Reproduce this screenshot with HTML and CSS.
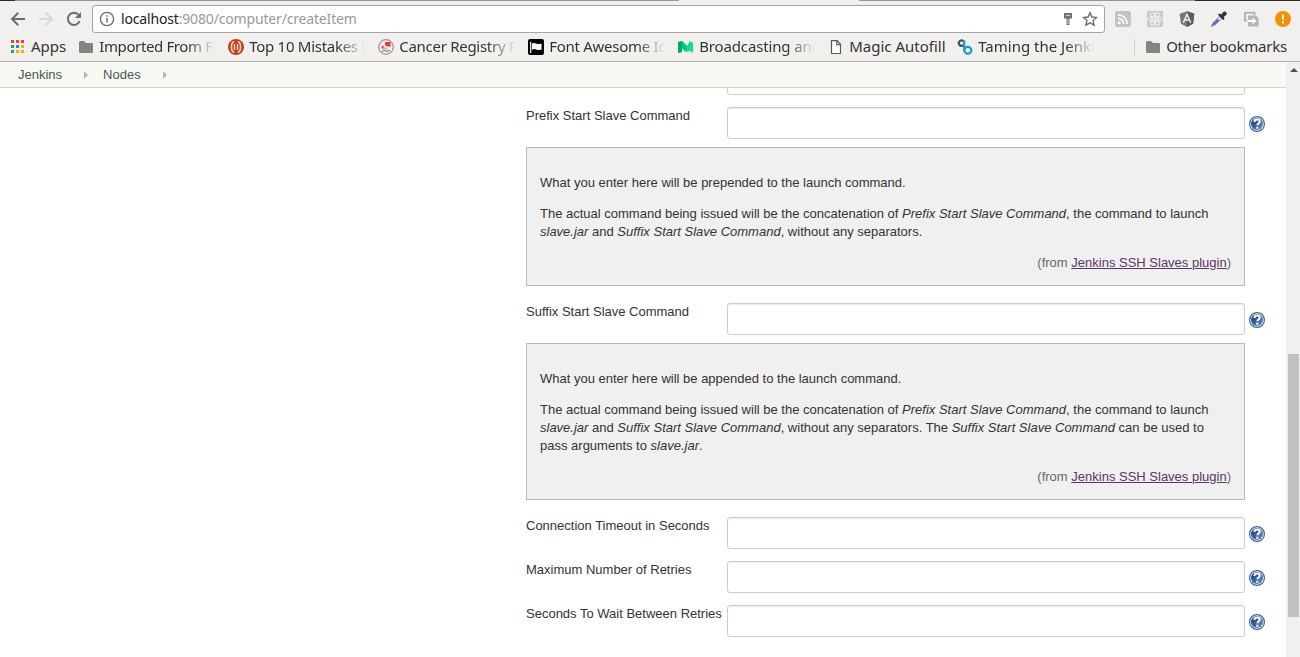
FILE: index.html
```
<!DOCTYPE html>
<html lang="en">
<head>
<meta charset="utf-8">
<title>Jenkins</title>
<link rel="stylesheet" href="styles.css">
</head>
<body>
<svg class="defs" width="0" height="0">
  <defs>
    <linearGradient id="blue" x1="0" y1="0" x2="1" y2="1"><stop offset="0.2" stop-color="#20467f"/><stop offset="1" stop-color="#6f97c8"/></linearGradient>
    <symbol id="help" viewBox="0 0 16 16">
      <circle cx="8" cy="8" r="7.400" fill="#fff" stroke="#3b64a0" stroke-width="1.200"/>
      <circle cx="8" cy="8" r="6" fill="url(#blue)"/>
      <path d="M5.400 6C5.500 4.300 6.600 3.600 8.100 3.600c1.600 0 2.600.8 2.600 2.100 0 1.700-2.300 1.800-2.300 3.600M8.300 10.700v2.100" fill="none" stroke="#fff" stroke-width="2"/>
    </symbol>
    <symbol id="folder" viewBox="0 0 16 16"><path d="M1 3.500Q1 2 2.300 2H6l2 2h6q1 0 1 1v8q0 1-1 1H2q-1 0-1-1z" fill="#848484"/></symbol>
  </defs>
</svg>
<div class="browser">
  <div class="tabstrip"><i class="dark start"></i><i class="tabs"></i><i class="active"></i><i class="tabs second"></i><i class="dark end"></i></div>
  <div class="toolbar">
    <svg class="nav" viewBox="0 0 16 16"><path d="M15 8H2.500M8.300 1.700L2 8l6.300 6.300" fill="none" stroke="#6e6e6e" stroke-width="2"/></svg>
    <svg class="nav" viewBox="0 0 16 16"><path d="M1 8h12.500M7.700 1.700L14 8l-6.300 6.300" fill="none" stroke="#d8d8d8" stroke-width="2"/></svg>
    <svg class="nav" viewBox="0 0 16 16"><path d="M13.600 10.200A6.100 6.100 0 1 1 12.300 3.600" fill="none" stroke="#6e6e6e" stroke-width="2"/><path d="M15 1v6H9z" fill="#6e6e6e"/></svg>
    <div class="address">
      <svg class="info" viewBox="0 0 16 16"><circle cx="8" cy="8" r="6.600" fill="none" stroke="#6b6b6b" stroke-width="1.300"/><path d="M8 7v4.500M8 4.300v1.500" stroke="#6b6b6b" stroke-width="1.500"/></svg>
      <span class="url"><b>localhost</b>:9080/computer/createItem</span>
      <svg class="key" viewBox="0 0 16 16"><path d="M4 2h8v5.500H9.500V14h-3V7.500H4z" fill="#737373"/><path d="M6 4.500h4M8 8v5" stroke="#d0d0d0"/></svg>
      <svg class="star" viewBox="0 0 16 16"><path d="M8 1.800l1.900 4.200 4.600.5-3.400 3.100 1 4.600L8 11.900l-4.100 2.300 1-4.600L1.500 6.500l4.600-.5z" fill="none" stroke="#6e6e6e" stroke-width="1.400"/></svg>
    </div>
    <div class="extensions">
      <svg viewBox="0 0 16 16"><rect width="16" height="16" rx="2" fill="#c3c3c3"/><circle cx="4.200" cy="11.800" r="1.500" fill="#fff"/><path d="M3 7.300a5.700 5.700 0 0 1 5.700 5.700M3 3.800A9.200 9.200 0 0 1 12.200 13" fill="none" stroke="#fff" stroke-width="1.700"/></svg>
      <svg viewBox="0 0 16 16"><rect width="16" height="16" fill="#c9c9c9"/><g fill="none" stroke="#f5f5f5"><ellipse cx="8" cy="8" rx="7" ry="2.700"/><ellipse cx="8" cy="8" rx="7" ry="2.700" transform="rotate(60 8 8)"/><ellipse cx="8" cy="8" rx="7" ry="2.700" transform="rotate(120 8 8)"/></g><circle cx="8" cy="8" r="1.400" fill="#f5f5f5"/></svg>
      <svg viewBox="0 0 16 16"><path d="M8 .3l7.300 2.500-1.200 9.900L8 15.900l-6.100-3.200L.7 2.800z" fill="#777"/><path d="M8 .3l7.300 2.500-1.200 9.900L8 15.900z" fill="#5b5b5b"/><path d="M4.300 11.800L8 3.300l3.700 8.500M5.800 9h4.400" fill="none" stroke="#eee" stroke-width="1.500"/></svg>
      <svg viewBox="0 0 16 16"><path d="M10 6l-7.500 7.500" stroke="#6f7888" stroke-width="3.600"/><path d="M9.500 6.500L3 13" stroke="#e9efff" stroke-width="2"/><path d="M7.500 8.500L3 13" stroke="#3e67e0" stroke-width="2"/><path d="M2.700 12.500L.5 15.500" stroke="#666" stroke-width="1.500"/><path d="M6.800 3.400l2-1 1.500 1L12.500.8Q14 0 15.300 1.200q1 1.500-.1 2.700L12.700 6l.8 1.700-1.200 1.500z" fill="#333"/></svg>
      <svg viewBox="0 0 16 16"><path d="M2 1v8.500h2M2 1.700h9.500V4" fill="none" stroke="#b5b5b5" stroke-width="2"/><path d="M5 4.500h8l2.500 2.500v8.500H5z" fill="#b5b5b5"/><path d="M5 10h6" fill="none" stroke="#fff" stroke-width="2"/><path d="M9.500 6.500L13.500 10l-4 3.500z" fill="#fff"/></svg>
      <svg viewBox="0 0 16 16"><circle cx="8" cy="8" r="8" fill="#f39200"/><path d="M8 3.500v5.300M8 10.300v2" stroke="#fff" stroke-width="2"/></svg>
    </div>
  </div>
  <div class="bookmarks">
    <div class="mark apps"><svg viewBox="0 0 16 16"><path d="M1 1h3v3H1zM6 1h3v3H6zM11 1h3v3h-3z" fill="#ea4335"/><path d="M1 6h3v3H1zM1 11h3v3H1z" fill="#2fa050"/><path d="M6 6h3v3H6z" fill="#2384f0"/><path d="M11 6h3v3h-3zM6 11h3v3H6zM11 11h3v3h-3z" fill="#fbae06"/></svg><span>Apps</span></div>
    <div class="mark wide tighter"><svg><use href="#folder"/></svg><span>Imported From Fi</span></div>
    <div class="mark wide tight"><svg viewBox="0 0 16 16"><circle cx="8" cy="8" r="8" fill="#c63f17"/><path d="M6.200 2.800Q3.500 3 3.500 8t2.700 5.200M9.800 2.800Q12.500 3 12.500 8t-2.700 5.200" fill="none" stroke="#f7ded5" stroke-width="1.500"/><path d="M6.500 5v6M9.500 5v6" stroke="#f7ded5" stroke-width="1.300"/></svg><span>Top 10 Mistakes N</span></div>
    <div class="mark wide tight"><svg viewBox="0 0 16 16"><circle cx="8" cy="8" r="7.300" fill="#f3eeee" stroke="#999" stroke-width="1.300"/><path d="M7 3h5.500v5.500l-2-1.500L9 8 7 5.500zM4 6.500l2 1-1 2.500-1.500-1z" fill="#ed3145"/><path d="M5 10.500l2-1.500 2 1.500" fill="none" stroke="#f39aa4" stroke-width="1.500"/><path d="M4 12.500l3-1.200 2 1.200 3-1.500" fill="none" stroke="#888" stroke-width="1.200"/></svg><span>Cancer Registry P</span></div>
    <div class="mark wide tight"><svg viewBox="0 0 16 16"><rect width="16" height="16" rx="2" fill="#000"/><path d="M2.700 3v11" stroke="#fff" stroke-width="1.200"/><path d="M4 4.500q2-1 4 0t5.500 0v6q-3 1-5.300 0T4 10.700z" fill="#fff"/></svg><span>Font Awesome Ic</span></div>
    <div class="mark wide snug"><svg viewBox="0 0 16 16"><path d="M0 3l4-1 5 5 3-5 3 2v10l-3-2-4 1-4-4v4l-4 1z" fill="#10e080"/><path d="M0 3l4-1v11l-4 1z" fill="#00a86b"/><path d="M4 2l5 5-1.500 6L4 9z" fill="#00c878"/></svg><span>Broadcasting and</span></div>
    <div class="mark magic"><svg viewBox="0 0 16 16"><path d="M3.500 1.600h5.700l3.300 3.700v9.200h-9zM8.800 2v3.700h3.500" fill="#fff" stroke="#5a5a5a" stroke-width="1.200"/></svg><span>Magic Autofill</span></div>
    <div class="mark wide"><svg viewBox="0 0 16 16"><path d="M6.500 2.200A2.700 2.700 0 1 0 5.800 6.500H8" fill="none" stroke="#34546c" stroke-width="2.200"/><path d="M7.200 1.500v10" stroke="#1a9cbd" stroke-width="2.200"/><circle cx="10.800" cy="11.300" r="3.500" fill="none" stroke="#1a9cbd" stroke-width="2.200"/></svg><span>Taming the Jenki</span></div>
    <div class="mark other"><svg><use href="#folder"/></svg><span>Other bookmarks</span></div>
  </div>
</div>
<div class="viewport">
  <div class="page">
    <nav class="crumbs"><span>Jenkins</span><i></i><span>Nodes</span><i></i></nav>
    <main class="form">
      <div class="row first"><label></label><input type="text"></div>
      <div class="row"><label>Prefix Start Slave Command</label><input type="text"><svg><use href="#help"/></svg></div>
      <section class="help">
        <p>What you enter here will be prepended to the launch command.</p>
        <p>The actual command being issued will be the concatenation of <em>Prefix Start Slave Command</em>, the command to launch <em>slave.jar</em> and <em>Suffix Start Slave Command</em>, without any separators.</p>
        <div class="from">(from <a href="#">Jenkins SSH Slaves plugin</a>)</div>
      </section>
      <div class="row"><label>Suffix Start Slave Command</label><input type="text"><svg><use href="#help"/></svg></div>
      <section class="help">
        <p>What you enter here will be appended to the launch command.</p>
        <p>The actual command being issued will be the concatenation of <em>Prefix Start Slave Command</em>, the command to launch <em>slave.jar</em> and <em>Suffix Start Slave Command</em>, without any separators. The <em>Suffix Start Slave Command</em> can be used to pass arguments to <em>slave.jar</em>.</p>
        <div class="from">(from <a href="#">Jenkins SSH Slaves plugin</a>)</div>
      </section>
      <div class="row"><label>Connection Timeout in Seconds</label><input type="text"><svg><use href="#help"/></svg></div>
      <div class="row"><label>Maximum Number of Retries</label><input type="text"><svg><use href="#help"/></svg></div>
      <div class="row"><label>Seconds To Wait Between Retries</label><input type="text"><svg><use href="#help"/></svg></div>
    </main>
  </div>
  <div class="scrollbar"><i class="up"></i><i class="thumb"></i></div>
</div>
</body>
</html>
```
FILE: styles.css
```
* { box-sizing: border-box; }
body { margin: 0; width: 1300px; height: 657px; overflow: hidden; display: flex; flex-direction: column; background: #fff; font: 13px/18px "Liberation Sans", Arial, sans-serif; color: #333; }
svg { display: block; flex: none; width: 16px; height: 16px; }
svg.defs { width: 0; height: 0; }
.browser { height: 62px; flex: none; background: #f2f0ef; border-bottom: 1px solid #b3b1b1; font-family: "Noto Sans", "Open Sans", sans-serif; }
.tabstrip { display: flex; height: 1px; }
.tabstrip i { height: 1px; }
.tabstrip .dark { background: #2d2929; }
.tabstrip .start { width: 15px; }
.tabstrip .tabs { width: 664px; background: #989493; }
.tabstrip .active { width: 180px; }
.tabstrip .second { width: 336px; }
.tabstrip .end { flex: 1; }
.toolbar { height: 36px; display: flex; align-items: center; padding: 0 9px 0 10px; }
.nav { margin-right: 12px; }
.address { width: 1013px; height: 28px; margin-left: -2px; display: flex; align-items: center; padding: 0 6px; background: #fff; border: 1px solid #a6a4a4; border-radius: 3px; }
.url { margin-left: 6px; flex: 1; font-size: 14px; letter-spacing: -0.165px; color: #999; white-space: nowrap; }
.url b { font-weight: 400; color: #222; }
.key { margin-right: 6px; }
.extensions { display: flex; gap: 16px; margin-left: 10px; }
.bookmarks { display: flex; gap: 12px; height: 24px; padding: 0 13px 4px 10px; align-items: center; font-size: 15px; }
.mark { display: flex; align-items: center; gap: 5px; white-space: nowrap; color: #333; }
.mark span { line-height: 22px; margin-top: -3px; }
.wide { width: 138px; }
.wide span { width: 117px; overflow: hidden; -webkit-mask-image: linear-gradient(to right, #000 88px, transparent 116px); mask-image: linear-gradient(to right, #000 88px, transparent 116px); }
.tight span { letter-spacing: -0.28px; }
.tighter span { letter-spacing: -0.38px; }
.snug span { letter-spacing: -0.15px; }
.mark.magic { width: 117px; }
.other { margin-left: auto; padding-left: 10px; height: 16px; border-left: 1px solid #cfcdcd; letter-spacing: -0.22px; }
.viewport { display: flex; flex: 1; min-height: 0; }
.page { width: 1286px; height: 595px; overflow: hidden; }
.crumbs { height: 26px; display: flex; align-items: center; padding-left: 18px; background: #f6faf2; border-bottom: 1px solid #d3d7cf; color: #4d545d; }
.crumbs i { margin: 1px 15px 0 22px; border: solid transparent; border-width: 4px 0 4px 4px; border-left-color: #b4b4b4; }
.form { height: 569px; overflow: hidden; padding-left: 526px; }
.row { display: flex; height: 32px; margin-bottom: 12px; }
.row.first { margin-top: -25px; }
.row label { width: 201px; white-space: nowrap; }
.row input { width: 518px; height: 32px; padding: 6px; border: 1px solid #ccc; border-radius: 3px; background: #fff; box-shadow: inset 0 1px 1px rgba(0,0,0,.075); }
.row svg { margin: 9px 0 0 4px; }
.help { width: 719px; margin: -4px 0 17px; padding: 13px; border: 1px solid #bbb; background: #f0f0f0; }
.help p { margin: 13px 0; }
.from { text-align: right; color: #666; }
.from a { color: #5c3566; }
.scrollbar { width: 14px; background: #f1f0f0; display: flex; flex-direction: column; align-items: center; }
.up { margin: 6px 0 0 1px; border: solid transparent; border-width: 0 4px 4px; border-bottom-color: #505050; }
.thumb { width: 11px; height: 263px; margin-top: 282px; background: #c1c1c1; }
```
